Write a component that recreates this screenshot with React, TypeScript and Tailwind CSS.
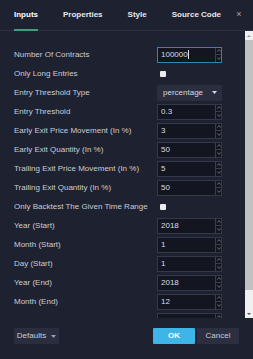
import React from "react";

type Field =
  | { label: string; kind: "number"; value: string; focused?: boolean }
  | { label: string; kind: "check" }
  | { label: string; kind: "select"; value: string };

const fields: Field[] = [
  { label: "Number Of Contracts", kind: "number", value: "100000", focused: true },
  { label: "Only Long Entries", kind: "check" },
  { label: "Entry Threshold Type", kind: "select", value: "percentage" },
  { label: "Entry Threshold", kind: "number", value: "0.3" },
  { label: "Early Exit Price Movement (In %)", kind: "number", value: "3" },
  { label: "Early Exit Quantity (In %)", kind: "number", value: "50" },
  { label: "Trailing Exit Price Movement (In %)", kind: "number", value: "5" },
  { label: "Trailing Exit Quantity (In %)", kind: "number", value: "50" },
  { label: "Only Backtest The Given Time Range", kind: "check" },
  { label: "Year (Start)", kind: "number", value: "2018" },
  { label: "Month (Start)", kind: "number", value: "1" },
  { label: "Day (Start)", kind: "number", value: "1" },
  { label: "Year (End)", kind: "number", value: "2018" },
  { label: "Month (End)", kind: "number", value: "12" },
  { label: "Day (End)", kind: "number", value: "31" },
];

const tabs = ["Inputs", "Properties", "Style", "Source Code"];

const Caret = ({ className }: { className?: string }) => (
  <svg width="5" height="3" viewBox="0 0 5 3" className={className}>
    <path d="M0 0h5L2.5 3z" fill="currentColor" />
  </svg>
);

const Spinner = () => (
  <div className="flex h-full w-[6px] flex-col border-l border-[#3a3e4e] text-[#8a8e9c]">
    <div className="flex flex-1 items-center justify-center">
      <svg width="4" height="3" viewBox="0 0 4 3">
        <path d="M0.3 2.6L2 0.6l1.7 2" stroke="currentColor" strokeWidth="0.7" fill="none" />
      </svg>
    </div>
    <div className="flex flex-1 items-center justify-center border-t border-[#3a3e4e]">
      <svg width="4" height="3" viewBox="0 0 4 3">
        <path d="M0.3 0.4L2 2.4l1.7-2" stroke="currentColor" strokeWidth="0.7" fill="none" />
      </svg>
    </div>
  </div>
);

const Control = ({ field }: { field: Field }) => {
  if (field.kind === "check") {
    return (
      <div className="flex h-[16px] w-[65px] items-center pl-[3px]">
        <div className="h-[6px] w-[6px] rounded-[1px] bg-[#ebebeb]" />
      </div>
    );
  }
  if (field.kind === "select") {
    return (
      <div className="flex h-[16px] w-[65px] items-center justify-between rounded-[1px] bg-[#2b2e3e] pl-[6px] pr-[5px] text-[#d6d8de]">
        <span>{field.value}</span>
        <Caret className="text-[#d6d8de]" />
      </div>
    );
  }
  return (
    <div
      className={`flex h-[16px] w-[65px] items-center border bg-[#131521] ${
        field.focused ? "border-[#2b88ad]" : "border-[#343848]"
      }`}
    >
      <div className="flex flex-1 items-center pl-[3px] text-[#dcdee4]">
        {field.value}
        {field.focused && <span className="ml-[0.5px] h-[9px] w-px bg-[#dcdee4]" />}
      </div>
      <Spinner />
    </div>
  );
};

export default function App() {
  return (
    <div className="flex h-[359px] w-[253px] flex-col bg-[#1e2130] font-['Liberation_Sans',Arial,sans-serif] text-[8px] leading-none">
      <header className="flex h-[31px] items-stretch border-b border-[#2c3040] pl-[14px]">
        <div className="flex gap-[25px]">
          {tabs.map((tab, i) => (
            <div key={tab} className="relative flex items-center pb-[1px]">
              <span className={`font-bold ${i === 0 ? "text-white" : "text-[#e6e7eb]"}`}>{tab}</span>
              {i === 0 && <div className="absolute bottom-[-1px] left-0 right-0 h-[2px] bg-[#3f9c7d]" />}
            </div>
          ))}
        </div>
        <div className="ml-auto flex w-[28px] items-center justify-center pb-[1px] text-[9px] text-[#a9acb8]">×</div>
      </header>

      <div className="flex h-[287px]">
        <div className="flex-1 overflow-hidden pt-[14px] pl-[14px] pr-[23px]">
          {fields.map((f) => (
            <div key={f.label} className="flex h-[19px] items-center justify-between">
              <span className="text-[#c9ccd5]">{f.label}</span>
              <Control field={f} />
            </div>
          ))}
        </div>
        <div className="flex w-[8px] flex-col bg-[#f0f0f0]">
          <div className="flex h-[9px] items-center justify-center text-[#9a9a9a]">
            <svg width="4" height="2" viewBox="0 0 4 2">
              <path d="M0 2L2 0l2 2z" fill="currentColor" />
            </svg>
          </div>
          <div className="mx-[0px] h-[250px] bg-[#c1c1c1]" />
          <div className="flex flex-1 items-end justify-center pb-[3px] text-[#505050]">
            <svg width="4" height="2" viewBox="0 0 4 2">
              <path d="M0 0h4L2 2z" fill="currentColor" />
            </svg>
          </div>
        </div>
      </div>

      <footer className="flex items-start px-[14px] pt-[10px]">
        <button className="flex h-[16px] w-[45px] items-center justify-center gap-[5px] rounded-[1px] bg-[#2a2d3d] text-[#c9ccd5]">
          Defaults
          <Caret className="text-[#9a9daa]" />
        </button>
        <div className="ml-auto flex gap-[2px]">
          <button className="h-[16px] w-[42px] rounded-[1px] bg-[#3db5e6] font-bold text-white">OK</button>
          <button className="h-[16px] w-[42px] rounded-[1px] bg-[#2c2f3f] text-[#c9ccd5]">Cancel</button>
        </div>
      </footer>
    </div>
  );
}
